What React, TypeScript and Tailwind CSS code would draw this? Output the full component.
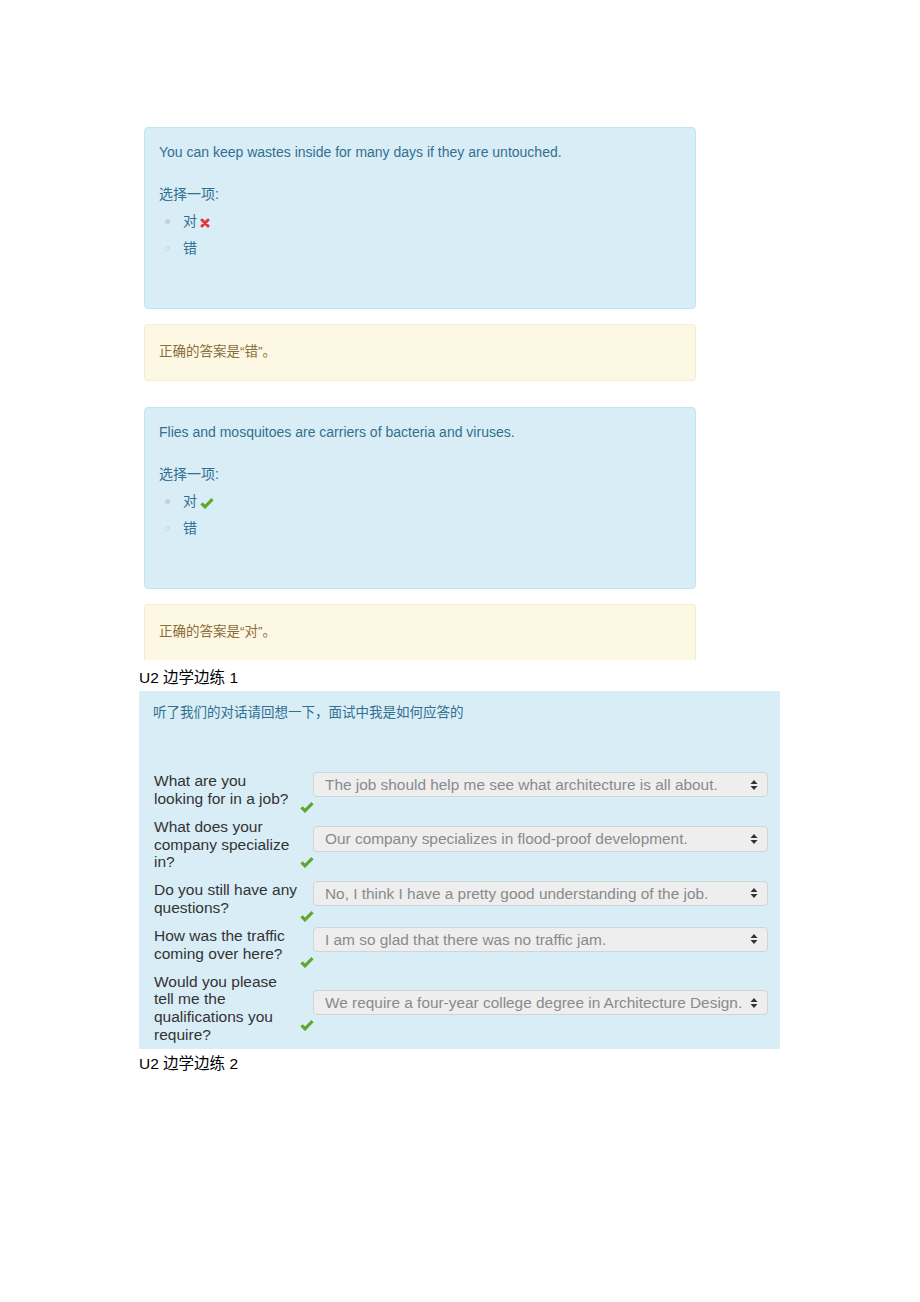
import React from "react";

const cjk = { fontFamily: '"Liberation Sans", "Noto Sans CJK SC", sans-serif' };

function Check({ className = "" }: { className?: string }) {
  return (
    <svg viewBox="0 0 14 12" width="14" height="12" className={className}>
      <path d="M1.5 6.3 L5 9.8 L12.5 2.2" fill="none" stroke="#5fa82b" strokeWidth="3.2" strokeLinejoin="miter" />
    </svg>
  );
}

function Cross() {
  return (
    <svg viewBox="0 0 10 10" width="10" height="10">
      <path d="M2 2 L8 8 M8 2 L2 8" fill="none" stroke="#e8333a" strokeWidth="3" strokeLinecap="round" />
    </svg>
  );
}

function Arrows() {
  return (
    <svg viewBox="0 0 8 12" width="8" height="12">
      <path d="M4 1 L7.5 5 L0.5 5 Z M4 11 L7.5 7 L0.5 7 Z" fill="#333" />
    </svg>
  );
}

function TrueFalse({ text, mark }: { text: string; mark: "cross" | "check" }) {
  return (
    <div className="w-[552px] h-[182px] rounded-[4px] border border-[#bce8f1] bg-[#d9edf7] px-[14px] pt-[14px] text-[#31708f]" style={cjk}>
      <p className="text-[14px] leading-[20px]">{text}</p>
      <div className="mt-[22px] text-[14px] leading-[20px]">选择一项:</div>
      <div className="mt-[4px]">
        <div className="flex items-center h-[27px]">
          <span className="ml-[6px] w-[5px] h-[5px] rounded-full bg-[#c8d0d4]" />
          <span className="ml-[13px] text-[14px]">对</span>
          <span className="ml-[3px] flex items-center mt-[2px]">{mark === "cross" ? <Cross /> : <Check />}</span>
        </div>
        <div className="flex items-center h-[27px]">
          <span className="ml-[6px] w-[5px] h-[5px] rounded-full border border-[#c8d0d4]" />
          <span className="ml-[13px] text-[14px]">错</span>
        </div>
      </div>
    </div>
  );
}

function Feedback({ text, cut }: { text: string; cut?: boolean }) {
  return (
    <div
      className={
        "w-[552px] rounded-[4px] border border-[#faebcc] bg-[#fcf8e3] px-[14px] text-[#8a6d3b] text-[13.5px] flex items-center " +
        (cut ? "h-[56px] border-b-0 rounded-b-none" : "h-[57px]")
      }
      style={cjk}
    >
      {text}
    </div>
  );
}

const rows = [
  { q: ["What are you", "looking for in a job?"], a: "The job should help me see what architecture is all about." },
  { q: ["What does your", "company specialize", "in?"], a: "Our company specializes in flood-proof development." },
  { q: ["Do you still have any", "questions?"], a: "No, I think I have a pretty good understanding of the job." },
  { q: ["How was the traffic", "coming over here?"], a: "I am so glad that there was no traffic jam." },
  { q: ["Would you please", "tell me the", "qualifications you", "require?"], a: "We require a four-year college degree in Architecture Design." },
];

export default function App() {
  return (
    <div className="w-[920px] h-[1302px] bg-white pt-[127px]" style={cjk}>
      <div className="ml-[144px]">
        <TrueFalse text="You can keep wastes inside for many days if they are untouched." mark="cross" />
        <div className="mt-[15px]">
          <Feedback text="正确的答案是“错”。" />
        </div>
        <div className="mt-[26px]">
          <TrueFalse text="Flies and mosquitoes are carriers of bacteria and viruses." mark="check" />
        </div>
        <div className="mt-[15px]">
          <Feedback text="正确的答案是“对”。" cut />
        </div>
      </div>
      <div className="ml-[139px] h-[31px] pt-[8px] leading-[20px] text-[15.5px] text-black">U2 边学边练 1</div>
      <div className="ml-[139px] w-[641px] h-[358px] bg-[#d9edf7] pt-[12px]">
        <div className="ml-[14px] text-[13.5px] leading-[20px] text-[#31708f]">听了我们的对话请回想一下，面试中我是如何应答的</div>
        <div className="mt-[49px] flex flex-col gap-[10px] pl-[15px]" style={{ fontFamily: '"Liberation Sans", Arial, sans-serif' }}>
          {rows.map((r, i) => (
            <div key={i} className="flex items-center">
              <div className="w-[146px] text-[15.5px] leading-[17.6px] text-[#333]">
                {r.q.map((l, j) => (
                  <div key={j} className="whitespace-nowrap">{l}</div>
                ))}
              </div>
              <div className="h-[36px] flex flex-col">
                <div className="ml-[13px] w-[455px] h-[28px] rounded-[4px] border border-[#cfd4d6] bg-[#eeeeee] flex items-center justify-between pl-[11px] pr-[9px] text-[15.4px] text-[#8a8a8a] whitespace-nowrap">
                  <span>{r.a}</span>
                  <Arrows />
                </div>
                <div className="mt-[4px] h-[12px]">
                  <Check />
                </div>
              </div>
            </div>
          ))}
        </div>
      </div>
      <div className="ml-[139px] h-[29px] pt-[5px] leading-[20px] text-[15.5px] text-black">U2 边学边练 2</div>
    </div>
  );
}
